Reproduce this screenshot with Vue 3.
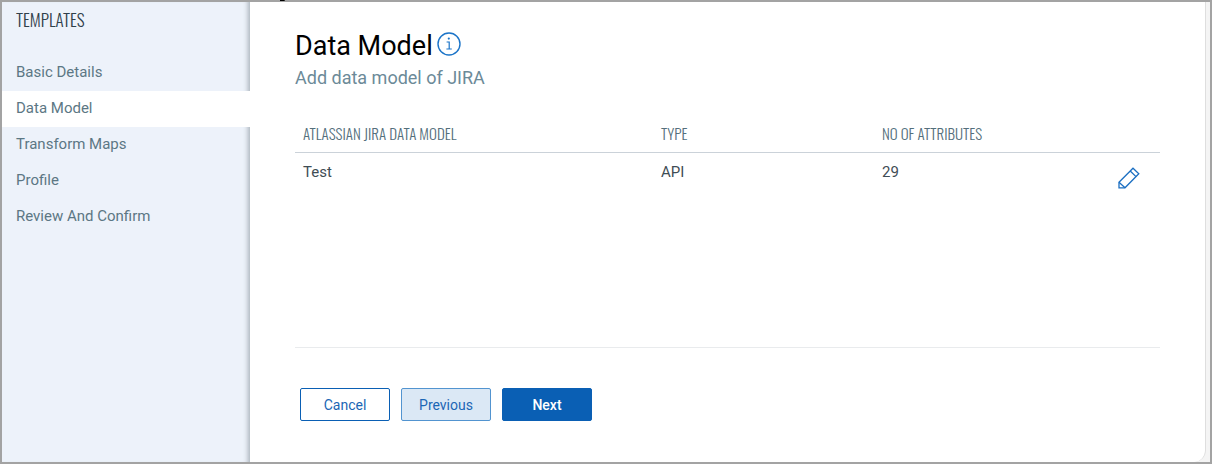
<template>
  <div class="wizard">
    <aside class="sidebar">
      <h2 class="sidebar-title">TEMPLATES</h2>
      <nav class="steps">
        <a
          v-for="step in steps"
          :key="step"
          href="#"
          class="step"
          :class="{ active: step === activeStep }"
          @click.prevent="activeStep = step"
        >{{ step }}</a>
      </nav>
    </aside>

    <main class="panel">
      <header>
        <div class="title-row">
          <h1 class="title">Data Model</h1>
          <button type="button" class="icon-button" aria-label="Information">
            <svg class="info-icon" viewBox="0 0 24 24" fill="none" stroke="#1b74c8">
              <circle cx="12" cy="12" r="11" stroke-width="1.4" />
              <path d="M9.6 10h2.6v6.8M9.4 17h5.4" stroke-width="1.2" />
              <circle cx="11.8" cy="6.6" r="1.1" fill="#1b74c8" stroke="none" />
            </svg>
          </button>
        </div>
        <p class="subtitle">Add data model of JIRA</p>
      </header>

      <div class="table-area">
        <table class="models">
          <thead>
            <tr>
              <th class="col-name">ATLASSIAN JIRA DATA MODEL</th>
              <th class="col-type">TYPE</th>
              <th>NO OF ATTRIBUTES</th>
              <th class="col-action"></th>
            </tr>
          </thead>
          <tbody>
            <tr v-for="model in models" :key="model.name">
              <td>{{ model.name }}</td>
              <td>{{ model.type }}</td>
              <td>{{ model.attributes }}</td>
              <td class="action">
                <button type="button" class="icon-button" aria-label="Edit">
                  <svg class="edit-icon" viewBox="0 0 22 22" fill="none" stroke="#1b6fc2" stroke-width="1.3">
                    <path d="M1 15.2 15 1.2 20.8 6.8 7 20.8H1z" />
                    <path d="M12.2 4 18 9.6M1 15.2l6 5.6" />
                  </svg>
                </button>
              </td>
            </tr>
          </tbody>
        </table>
      </div>

      <footer class="buttons">
        <button type="button" class="btn">Cancel</button>
        <button type="button" class="btn previous">Previous</button>
        <button type="button" class="btn next">Next</button>
      </footer>
    </main>
  </div>
</template>

<script setup>
import { ref } from 'vue';

const steps = ['Basic Details', 'Data Model', 'Transform Maps', 'Profile', 'Review And Confirm'];
const activeStep = ref('Data Model');

const models = [{ name: 'Test', type: 'API', attributes: 29 }];
</script>

<style>
body {
  margin: 0;
}
</style>

<style scoped>
.wizard {
  position: relative;
  display: flex;
  box-sizing: border-box;
  min-height: 100vh;
  padding-right: 4px;
  border: 2px solid #a3a3a3;
  background: #f4f4f4;
  font-family: Roboto, sans-serif;
}

/* small notch on the top edge */
.wizard::before {
  content: "";
  position: absolute;
  top: -2px;
  left: 278px;
  width: 4px;
  height: 1px;
  border-right: 1px solid #333;
  background: #000;
}

.sidebar {
  flex: 0 0 248px;
  background: #edf2fa;
  box-shadow: inset -6px 0 5px -4px #a9b2ba;
}

.sidebar-title {
  margin: 0 0 16px;
  padding: 5px 14px 7px;
  font-family: Oswald, "Liberation Sans Narrow", sans-serif;
  font-size: 17px;
  font-weight: 350;
  line-height: 25px;
  color: #30404a;
}

.step {
  display: block;
  padding: 0 14px 2px;
  font-size: 15px;
  line-height: 34px;
  color: #5c7784;
  text-decoration: none;
}

.step.active {
  background: #fff;
}

.panel {
  flex: 1;
  padding: 28px 45px 41px;
  border-right: 1px solid #dedede;
  border-radius: 0 0 12px 0;
  background: #fff;
}

.title-row {
  display: flex;
  align-items: center;
  gap: 4px;
}

.title {
  margin: 0;
  font-size: 27px;
  font-weight: 400;
  line-height: 32px;
  color: #000;
}

.subtitle {
  margin: 4px 0 0;
  font-size: 18px;
  line-height: 24px;
  color: #6c8a98;
}

.icon-button {
  display: block;
  padding: 0;
  border: 0;
  background: none;
  cursor: pointer;
}

.info-icon {
  display: block;
  width: 24px;
  height: 24px;
  margin-bottom: 4px;
}

.edit-icon {
  display: block;
  width: 22px;
  height: 22px;
}

.table-area {
  min-height: 232px;
  margin-top: 25px;
  border-bottom: 1px solid #e9ebed;
}

.models {
  width: 100%;
  border-collapse: collapse;
  table-layout: fixed;
}

.models th {
  height: 35px;
  padding: 0 8px 2px;
  border-bottom: 1px solid #cbd2d9;
  font-family: Oswald, "Liberation Sans Narrow", sans-serif;
  font-size: 15px;
  font-weight: 350;
  line-height: 20px;
  text-align: left;
  color: #546f7c;
}

.models td {
  padding: 9px 8px;
  font-size: 15px;
  line-height: 20px;
  vertical-align: top;
  color: #3f4d55;
}

.models .col-name {
  width: 342px;
}

.models .col-type {
  width: 205px;
}

.models .col-action {
  width: 26px;
}

.models .action {
  padding: 14px 20px 0 0;
}

.buttons {
  display: flex;
  gap: 11px;
  margin-top: 40px;
  padding-left: 5px;
}

.btn {
  width: 90px;
  height: 33px;
  padding: 0;
  border: 1px solid #0a5fb4;
  border-radius: 2px;
  background: #fff;
  font-family: inherit;
  font-size: 14px;
  line-height: 20px;
  color: #1b66b5;
  cursor: pointer;
}

.btn.previous {
  border-color: #5294d0;
  background: #dbe8f5;
}

.btn.next {
  background: #0a5fb4;
  font-weight: 500;
  color: #fff;
}
</style>
